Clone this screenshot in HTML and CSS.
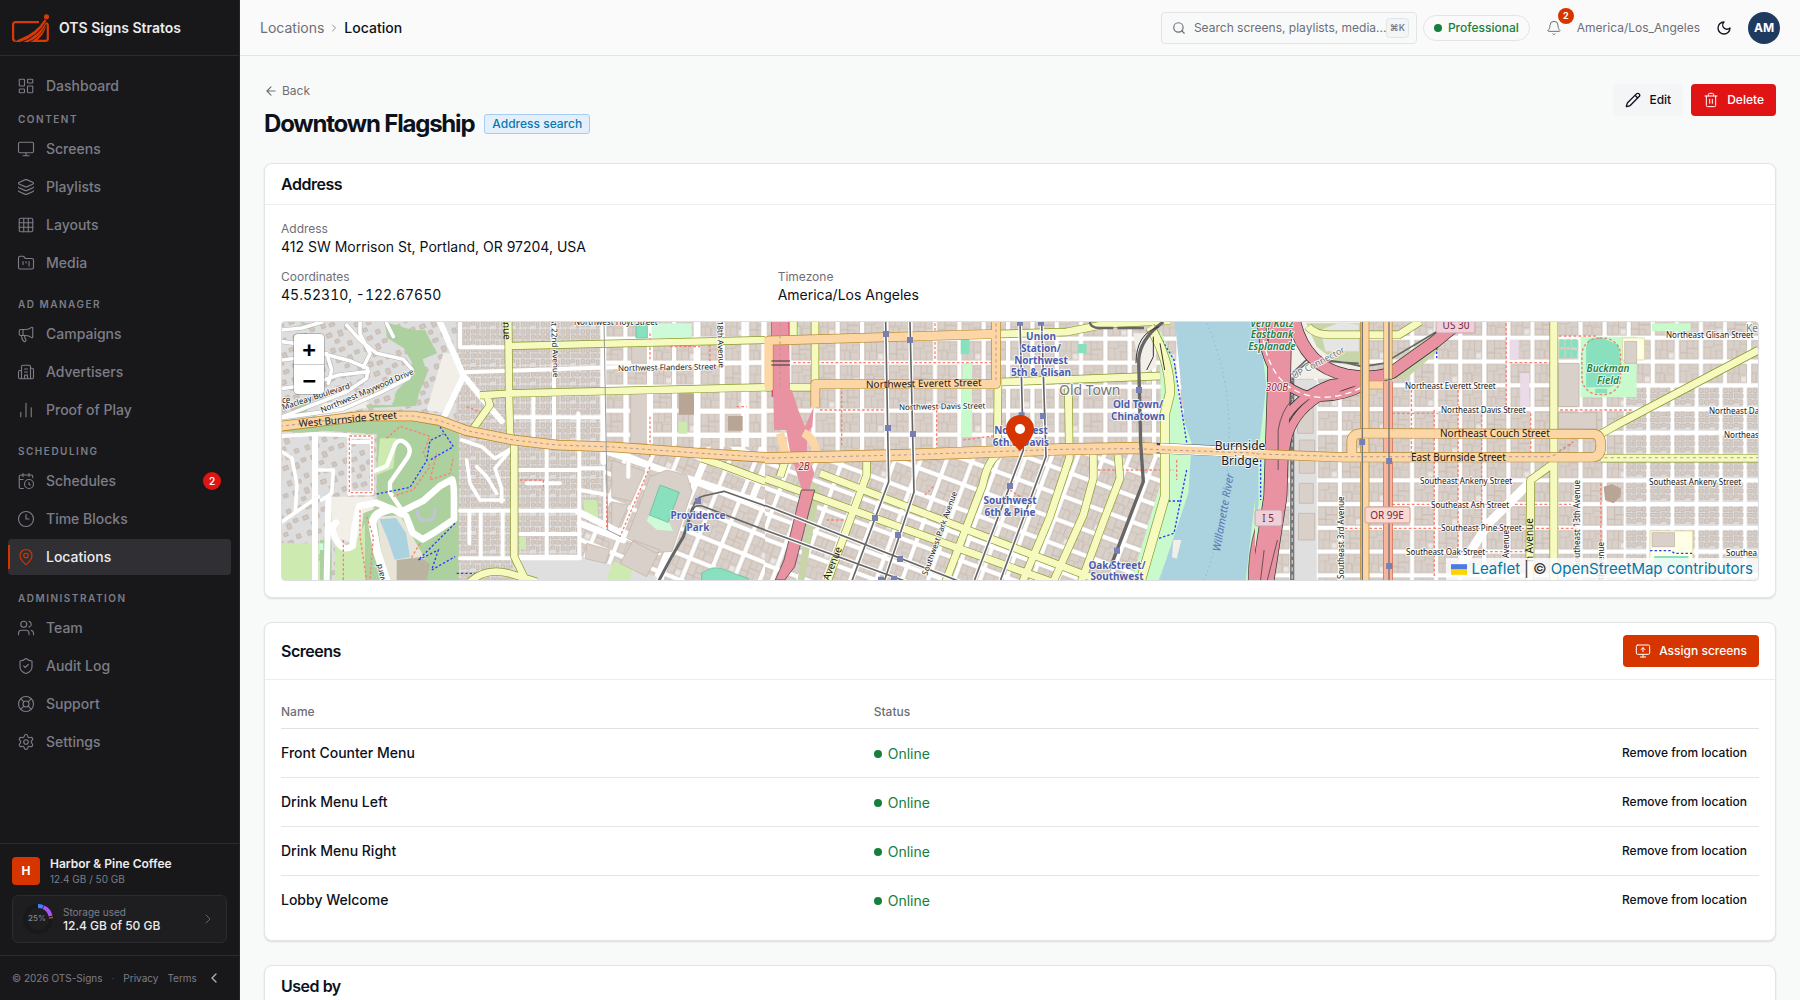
FILE: index.html
```html
<!DOCTYPE html>
<html lang="en">
<head>
<meta charset="utf-8">
<meta name="viewport" content="width=device-width, initial-scale=1">
<title>Location</title>
<link rel="stylesheet" href="styles.css">
</head>
<body>
<div class="app">
<aside class="sidebar">
  <div class="brand">
    <svg class="brand-logo" viewBox="0 0 38 30" aria-hidden="true"><g fill="none" stroke="#d83a07" stroke-width="2.200"><path d="M27 9.200H3.500Q1.100 9.200 1.100 11.500v14Q1.100 27.900 3.500 27.900M34 10Q35.800 10.500 35.800 12v13.600q0 2.300-2.300 2.300H23"/></g><path fill="#d83a07" d="M3 29Q5 26.500 9 25.500Q24 20 32.600 6.600l1.800 1.200Q25 24 8 29zM11 29Q26 23 34 9.500l.7.500Q29 24 16.500 29zM18.500 29Q29 23 34.600 12Q32 23 22.500 29z"/><circle cx="34.500" cy="3.800" r="2.600" fill="#d83a07"/></svg>
    <span>OTS Signs Stratos</span>
  </div>
  <nav class="nav">
    <a class="nav-item" href="#"><svg class="icon" viewBox="0 0 24 24"><rect x="3" y="3" width="7" height="9" rx="1"/><rect x="14" y="3" width="7" height="5" rx="1"/><rect x="14" y="12" width="7" height="9" rx="1"/><rect x="3" y="16" width="7" height="5" rx="1"/></svg>Dashboard</a>
    <section class="nav-group">
      <h2>Content</h2>
      <a class="nav-item" href="#"><svg class="icon" viewBox="0 0 24 24"><rect x="2" y="3" width="20" height="14" rx="2"/><path d="M8 21h8M12 17v4"/></svg>Screens</a>
      <a class="nav-item" href="#"><svg class="icon" viewBox="0 0 24 24"><path d="M12.830 2.180a2 2 0 0 0-1.660 0L2.600 6.080a1 1 0 0 0 0 1.830l8.580 3.910a2 2 0 0 0 1.660 0l8.580-3.900a1 1 0 0 0 0-1.830z"/><path d="M2 12a1 1 0 0 0 .58.91l8.600 3.910a2 2 0 0 0 1.650 0l8.580-3.900A1 1 0 0 0 22 12M2 17a1 1 0 0 0 .58.91l8.600 3.910a2 2 0 0 0 1.650 0l8.580-3.900A1 1 0 0 0 22 17"/></svg>Playlists</a>
      <a class="nav-item" href="#"><svg class="icon" viewBox="0 0 24 24"><rect x="3" y="3" width="18" height="18" rx="2"/><path d="M3 9h18M3 15h18M9 3v18M15 3v18"/></svg>Layouts</a>
      <a class="nav-item" href="#"><svg class="icon" viewBox="0 0 24 24"><path d="M4 20h16a2 2 0 0 0 2-2V8a2 2 0 0 0-2-2h-7.930a2 2 0 0 1-1.660-.9l-.82-1.200A2 2 0 0 0 7.930 3H4a2 2 0 0 0-2 2v13c0 1.100.9 2 2 2ZM8 10v4M12 10v2M16 10v6"/></svg>Media</a>
    </section>
    <section class="nav-group">
      <h2>Ad Manager</h2>
      <a class="nav-item" href="#"><svg class="icon" viewBox="0 0 24 24"><path d="M11 6a13 13 0 0 0 8.400-2.800A1 1 0 0 1 21 4v12a1 1 0 0 1-1.600.8A13 13 0 0 0 11 14H5a2 2 0 0 1-2-2V8a2 2 0 0 1 2-2zM6 14a12 12 0 0 0 2.400 7.200 2 2 0 0 0 3.200-2.400A8 8 0 0 1 10 14M8 6v8"/></svg>Campaigns</a>
      <a class="nav-item" href="#"><svg class="icon" viewBox="0 0 24 24"><path d="M10 12h4M10 8h4M10 16h4M14 21v-3a2 2 0 0 0-4 0v3M6 10H4a2 2 0 0 0-2 2v7a2 2 0 0 0 2 2h16a2 2 0 0 0 2-2V9a2 2 0 0 0-2-2h-2M6 21V5a2 2 0 0 1 2-2h8a2 2 0 0 1 2 2v16"/></svg>Advertisers</a>
      <a class="nav-item" href="#"><svg class="icon" viewBox="0 0 24 24"><path d="M5 21v-6M12 21V3M19 21V9"/></svg>Proof of Play</a>
    </section>
    <section class="nav-group">
      <h2>Scheduling</h2>
      <a class="nav-item" href="#"><svg class="icon" viewBox="0 0 24 24"><path d="M16 14v2.200l1.600 1M16 2v4M21 7.500V6a2 2 0 0 0-2-2H5a2 2 0 0 0-2 2v14a2 2 0 0 0 2 2h3.500M3 10h5M8 2v4"/><circle cx="16" cy="16" r="6"/></svg>Schedules<span class="count">2</span></a>
      <a class="nav-item" href="#"><svg class="icon" viewBox="0 0 24 24"><circle cx="12" cy="12" r="10"/><path d="M12 6v6h4"/></svg>Time Blocks</a>
      <a class="nav-item active" href="#" aria-current="page"><svg class="icon" viewBox="0 0 24 24"><path d="M20 10c0 4.993-5.539 10.193-7.399 11.799a1 1 0 0 1-1.202 0C9.539 20.193 4 14.993 4 10a8 8 0 0 1 16 0"/><circle cx="12" cy="10" r="3"/></svg>Locations</a>
    </section>
    <section class="nav-group">
      <h2>Administration</h2>
      <a class="nav-item" href="#"><svg class="icon" viewBox="0 0 24 24"><path d="M16 21v-2a4 4 0 0 0-4-4H6a4 4 0 0 0-4 4v2M16 3.128a4 4 0 0 1 0 7.744M22 21v-2a4 4 0 0 0-3-3.870"/><circle cx="9" cy="7" r="4"/></svg>Team</a>
      <a class="nav-item" href="#"><svg class="icon" viewBox="0 0 24 24"><path d="M20 13c0 5-3.500 7.500-7.660 8.950a1 1 0 0 1-.67-.01C7.500 20.500 4 18 4 13V6a1 1 0 0 1 1-1c2 0 4.500-1.200 6.240-2.720a1.170 1.170 0 0 1 1.520 0C14.510 3.810 17 5 19 5a1 1 0 0 1 1 1zM9 12l2 2 4-4"/></svg>Audit Log</a>
      <a class="nav-item" href="#"><svg class="icon" viewBox="0 0 24 24"><circle cx="12" cy="12" r="10"/><circle cx="12" cy="12" r="4"/><path d="m4.930 4.930 4.240 4.240M14.830 9.170l4.240-4.240M14.830 14.830l4.240 4.240M9.170 14.830l-4.240 4.240"/></svg>Support</a>
      <a class="nav-item" href="#"><svg class="icon" viewBox="0 0 24 24"><path d="M9.671 4.136a2.340 2.340 0 0 1 4.659 0 2.340 2.340 0 0 0 3.319 1.915 2.340 2.340 0 0 1 2.330 4.033 2.340 2.340 0 0 0 0 3.831 2.340 2.340 0 0 1-2.330 4.033 2.340 2.340 0 0 0-3.319 1.915 2.340 2.340 0 0 1-4.659 0 2.340 2.340 0 0 0-3.320-1.915 2.340 2.340 0 0 1-2.330-4.033 2.340 2.340 0 0 0 0-3.831A2.340 2.340 0 0 1 6.350 6.051a2.340 2.340 0 0 0 3.319-1.915"/><circle cx="12" cy="12" r="3"/></svg>Settings</a>
    </section>
  </nav>
  <div class="account">
    <div class="org">
      <span class="org-mark">H</span>
      <div><div class="org-name">Harbor &amp; Pine Coffee</div><div class="org-sub">12.4 GB / 50 GB</div></div>
    </div>
    <a class="storage" href="#">
      <svg class="donut" viewBox="0 0 30 30"><circle cx="15" cy="15" r="13" fill="none" stroke="#19191b" stroke-width="4"/><g fill="none" stroke-width="4"><path stroke="#3b82f6" d="M15 2A13 13 0 0 1 20 3"/><path stroke="#a855f7" d="M20.500 3.200A13 13 0 0 1 27.600 12"/><path stroke="#b0513a" d="M27.800 13A13 13 0 0 1 28 14.500"/></g><text x="14" y="17" text-anchor="middle">25%</text></svg>
      <div class="storage-text"><div class="storage-label">Storage used</div><div class="storage-value">12.4 GB of 50 GB</div></div>
      <svg class="icon chev" viewBox="0 0 24 24"><path d="m9 18 6-6-6-6"/></svg>
    </a>
  </div>
  <div class="legal">
    <span>© 2026 OTS-Signs</span><span class="mid">·</span><a href="#">Privacy</a><a href="#">Terms</a>
    <button class="collapse" aria-label="Collapse sidebar"><svg class="icon" viewBox="0 0 24 24"><path d="m15 18-6-6 6-6"/></svg></button>
  </div>
</aside>

<div class="content">
<header class="topbar">
  <nav class="crumbs"><a href="#">Locations</a><svg class="icon" viewBox="0 0 24 24"><path d="m9 18 6-6-6-6"/></svg><span>Location</span></nav>
  <div class="tools">
    <label class="search"><svg class="icon" viewBox="0 0 24 24"><circle cx="11" cy="11" r="8"/><path d="m21 21-4.300-4.300"/></svg><input type="text" placeholder="Search screens, playlists, media..." aria-label="Search"><kbd>⌘K</kbd></label>
    <a class="plan" href="#"><i class="dot"></i>Professional</a>
    <button class="bell" aria-label="Notifications"><svg class="icon" viewBox="0 0 24 24"><path d="M10.268 21a2 2 0 0 0 3.464 0M3.262 15.326A1 1 0 0 0 4 17h16a1 1 0 0 0 .74-1.673C19.410 13.956 18 12.499 18 8A6 6 0 0 0 6 8c0 4.499-1.411 5.956-2.738 7.326"/></svg><span class="bell-count">2</span></button>
    <span class="tz">America/Los_Angeles</span>
    <button class="theme" aria-label="Dark mode"><svg class="icon" viewBox="0 0 24 24"><path d="M12 3a6 6 0 0 0 9 9 9 9 0 1 1-9-9Z"/></svg></button>
    <button class="avatar">AM</button>
  </div>
</header>

<main class="page">
  <div class="page-head">
    <div>
      <a class="back" href="#"><svg class="icon" viewBox="0 0 24 24"><path d="m12 19-7-7 7-7M19 12H5"/></svg>Back</a>
      <div class="title-row"><h1>Downtown Flagship</h1><span class="badge">Address search</span></div>
    </div>
    <div class="actions">
      <button class="btn btn-soft"><svg class="icon" viewBox="0 0 24 24"><path d="M21.174 6.812a1 1 0 0 0-3.986-3.987L3.842 16.174a2 2 0 0 0-.5.83l-1.321 4.352a.5.5 0 0 0 .623.622l4.353-1.320a2 2 0 0 0 .83-.497zM15 5l4 4"/></svg>Edit</button>
      <button class="btn btn-danger"><svg class="icon" viewBox="0 0 24 24"><path d="M3 6h18M19 6v14a2 2 0 0 1-2 2H7a2 2 0 0 1-2-2V6M8 6V4a2 2 0 0 1 2-2h4a2 2 0 0 1 2 2v2M10 11v6M14 11v6"/></svg>Delete</button>
    </div>
  </div>

  <section class="card">
    <div class="card-head"><h2>Address</h2></div>
    <div class="card-body">
      <dl class="facts">
        <div class="wide"><dt>Address</dt><dd>412 SW Morrison St, Portland, OR 97204, USA</dd></div>
        <div><dt>Coordinates</dt><dd class="coords">45.52310, -122.67650</dd></div>
        <div><dt>Timezone</dt><dd>America/Los Angeles</dd></div>
      </dl>
      <div class="map">
        <svg class="map-art" viewBox="282 322 1476 258" preserveAspectRatio="xMidYMid slice">
          <defs>
            <g id="b1"><rect width="56" height="54"/><path d="M0 20h30V0M30 30h26M20 20v34M38 30v24M30 12h26"/></g>
            <g id="b2"><rect width="56" height="27"/><rect y="27" width="26" height="27"/><rect x="29" y="32" width="27" height="22"/><path d="M18 0v25M36 10h20M36 0v25M12 29v25"/></g>
            <g id="b3"><rect width="34" height="54"/><rect x="34" width="22" height="32"/><rect x="38" y="36" width="18" height="18" fill="#ebe6e3"/><path d="M0 27h34M14 27v27M20 0v27"/></g>
            <g id="b4"><rect width="22" height="36"/><rect x="22" width="34" height="22"/><rect x="22" y="24" width="34" height="30"/><rect y="38" width="22" height="16"/><path d="M40 0v20M22 38h20v16"/></g>
            <g id="lot"><rect width="61" height="60" fill="#dfdad6" stroke="none"/></g>
            <g id="h1"><path d="M3 3h11v12H3zM19 2h9v14h-9zM33 4h12v9H33zM48 2h9v12h-9zM2 21h14v9H2zM20 20h8v12h-8zM34 19h9v11h-9zM47 20h11v10H47zM4 36h9v14H4zM18 38h12v12H18zM34 36h10v9H34zM49 38h8v14h-8z"/></g>
            <g id="blocks" fill="#d9d0c9" stroke="#c1b2a7" stroke-width="1.500">
              <use href="#lot" x="6" y="6"/><use href="#lot" x="79" y="6"/><use href="#lot" x="152" y="6"/><use href="#lot" x="225" y="6"/><use href="#lot" x="6" y="78"/><use href="#lot" x="79" y="78"/><use href="#lot" x="152" y="78"/><use href="#lot" x="225" y="78"/><use href="#lot" x="6" y="150"/><use href="#lot" x="79" y="150"/><use href="#lot" x="152" y="150"/><use href="#lot" x="225" y="150"/>
              <use href="#b1" x="9" y="9"/><use href="#b2" x="82" y="9"/><use href="#b3" x="155" y="9"/><use href="#b4" x="228" y="9"/>
              <use href="#b3" x="9" y="81"/><use href="#b4" x="82" y="81"/><use href="#b1" x="155" y="81"/><use href="#b2" x="228" y="81"/>
              <use href="#b2" x="9" y="153"/><use href="#b1" x="82" y="153"/><use href="#b4" x="155" y="153"/><use href="#b3" x="228" y="153"/>
            </g>
            <pattern id="city" width="292" height="216" patternUnits="userSpaceOnUse" patternTransform="translate(14 14)"><rect width="292" height="216" fill="#fff"/><use href="#blocks"/></pattern>
            <pattern id="cityE" width="292" height="216" patternUnits="userSpaceOnUse" patternTransform="translate(50 12) scale(.94 .99)"><rect width="292" height="216" fill="#fff"/><use href="#blocks"/></pattern>
            <pattern id="citySW" width="292" height="216" patternUnits="userSpaceOnUse" patternTransform="translate(380 515) rotate(20.400)"><rect width="292" height="216" fill="#fff"/><use href="#blocks"/></pattern>
            <pattern id="citySW2" width="292" height="216" patternUnits="userSpaceOnUse" patternTransform="translate(1270 450) rotate(22)"><rect width="292" height="216" fill="#fff"/><use href="#blocks"/></pattern>
            <pattern id="homes" width="69" height="71.280" patternUnits="userSpaceOnUse" patternTransform="translate(1065 12)"><rect width="69" height="72" fill="#fff"/><g transform="translate(6 7)" fill="#d9d0c9" stroke="#bfb0a5" stroke-width="2"><rect width="58" height="58" fill="#dcdcdc" stroke="none"/><use href="#h1"/></g></pattern>
            <pattern id="homesW" width="60" height="56" patternUnits="userSpaceOnUse"><rect width="60" height="56" fill="#e0dfdf"/><use href="#h1" fill="#d9d0c9" stroke="#bfb0a5" stroke-width="2"/></pattern>
            <pattern id="homesH" width="90" height="80" patternUnits="userSpaceOnUse" patternTransform="rotate(-22)"><rect width="90" height="80" fill="#dedede"/><g fill="#d3c9c1" stroke="#b9aa9f" stroke-width="2"><path d="M6 6h12v14H6zM30 14h16v10H30zM62 4h12v12H62zM10 40h16v12H10zM46 44h12v16H46zM70 38h14v10H70zM28 66h12v10H28z"/></g></pattern>
          </defs>

          <!-- West side: Hillside, Washington Park, Northwest District -->
          <svg x="282" y="322" width="483" height="258" viewBox="6 36 1449 774">
            <rect x="0" y="30" width="540" height="790" fill="url(#homesH)"/>
            <rect x="530" y="30" width="440" height="790" fill="url(#homesW)"/>
            <rect x="965" y="30" width="500" height="420" fill="url(#city)"/>
            <path fill="url(#citySW2)" d="M970 410H1460V820H900V640L985 660z"/>
            <path fill="#e0dfdf" d="M905 740L1130 800V820H700V745z"/>
            <path fill="#d9d0c9" stroke="#c1b2a7" stroke-width="2" d="M995 450l100 34-40 90-60-14zM995 575l50 10-30 70-20-6zM920 700l70 20-14 40-60-14zM1055 100h48v60h-48zM1052 250h52v150h-52z"/>
            <g fill="#f2efe9"><path d="M490 130l45 0 15 70-50 110-60-10zM130 280l120-20 20 30-170 40zM150 560h130v60l-60 80-60-20z"/></g>
            <g fill="#add19e"><path d="M315 36l85 25 35-1 36 70-43 18 14 42-25 60-10 38-145 6-4-10 80 2 12-44 45-48 0-38-24-42-50-30zM6 350l240-26 160-4 70 12 60 28v450H230l20-200 40-16V372l-160-10-60 8-64-6z"/><path d="M120 690h35v120h-35zM50 270l40 0-10 40-40 10zM60 40h30v20z"/></g>
            <g fill="#cdebb0"><path d="M300 385h50l-10 90-50 20zM6 700h110v110H6zM165 710l60-10 30-60v170h-90zM910 570h40l5 50-40 4zM720 680l18 0v40l-20-4zM1000 755l60 14-10 45-70-6zM1195 335h26v36h-26z"/></g>
            <path fill="#e9e4d8" d="M290 620l70-4 35 60 40 70-60 10 0 54h-60z"/>
            <path fill="#b9b39f" d="M350 750l70-8 30 20-10 50h-90z"/>
            <path fill="#aad3df" d="M298 628l50-4 30 45 12 72-46 8-20-60z"/>
            <g fill="none" stroke="#fff" stroke-linejoin="round" stroke-linecap="round">
              <path stroke="#b5b5b5" stroke-width="14" d="M6 95l60 8 70 30 75 20 52 22-3 30-60 40-190 74M200 45l40 45 50 40 80 18 26 30-10 26-90 46-110 48-186 26M240 36v35l30 60-20 40M6 60l60-6 60-18M140 130l15 50-10 40M320 40l20 40M6 150l80-10M6 235l80-10 90-30 90-10"/>
              <path stroke-width="11" d="M6 95l60 8 70 30 75 20 52 22-3 30-60 40-190 74M200 45l40 45 50 40 80 18 26 30-10 26-90 46-110 48-186 26M240 36v35l30 60-20 40M6 60l60-6 60-18M140 130l15 50-10 40M320 40l20 40M6 150l80-10M6 235l80-10 90-30 90-10M6 425l30 20 15 80-5 80M6 635L115 560M115 480h45l-5 70-30 20M560 450l10 70 30 50h70M545 390l60 20 40 35 50-30-50 60 20 60 0 40M590 470l30 30 30 50"/>
              <path stroke-width="18" d="M105 378v440M480 36l70 160 70 85 45 52M550 200l-55 115M145 560l-5 250M970 36v420M1110 36v360M1250 36v390"/>
              <path stroke-width="12" d="M6 378l100-6 102 4v176M208 380h68v170H208M208 396h68M540 112h145M550 187l905-30M540 30v80M822 36v360M895 310v90M700 322h265M760 255v130M800 415v325M898 415v330M540 602h360M540 745h360M668 602v140M602 602v140M568 610v90M718 480h180M720 672h180M720 740h180M740 520h100M900 540l80 14M1045 420v80M1185 250v150M1040 255v150M900 475h70M1325 36v390M1390 36v400M1450 36v400M1260 305h200M1260 378h200"/>
              <path stroke-width="13" d="M285 482l35-14 26-66q14-20 34 0t-4 50l-46 66 0 30 34 50"/>
              <path stroke-width="20" d="M370 602l60-30 50-44 36-20q6 4 6 60v60l-60 40-34 20-30-20-20-50-40-20-50-20-50 10-14 60-6 60q-30 20-50-20t0-50"/>
              <path stroke-width="24" d="M330 598q-56 10-52 50l14 80 30 92"/>
              <path stroke-width="20" d="M980 424l480 160M895 605l240 120M1280 440l-60 140-80 230M900 640l130 50M1455 470l-40 100"/>
            </g>
            <g fill="none" stroke="#fa8072" stroke-width="4" stroke-dasharray="8 6"><path d="M208 378h68v170h-68zM320 385l40-36 90 30-20 50 20 40-50 70-60 20M470 430l-20 80 60-20 10-50M240 600v80l20 130M190 690v120M260 620l20 60-10 130M1110 70v80M1170 110h90M1110 320v120M1110 470l-90 210M720 510h70v30M420 700l-30 50M1290 90v70M560 290l50 20M980 560v100M1370 290h30"/></g>
            <g fill="none" stroke="#2a3cff" stroke-width="4" stroke-dasharray="7 6"><path d="M290 552l100-20 50-80 10-60 40-20M480 350l40 60-70 40M525 640l-110 110 60-30-20 60 70-40M530 790h60"/></g>
            <path d="M412 600q0 34 30 32 26-2 22-40" fill="none" stroke="#c3c3d6" stroke-width="10"/>
            <g><path fill="#d9d0c9" stroke="#bfb0a5" stroke-width="2" d="M1110 500l50-20 60 14 16 50-60 180-50 4-86-44zM1060 690l80 30-40 80-80-40z"/><path fill="#cdfad8" d="M1108 615l60 24 12 24-50-4-30-26z"/><path fill="#88e0be" stroke="#5cb795" stroke-width="2" d="M1140 525l58 22-34 90-56-22zM1068 40h34v44h-34zM1265 790q30-24 60-14l80 30v10h-140z"/><path fill="#cdfad8" d="M1115 40h120v44h-120zM118 700h12v20h-12z"/><path fill="#b8a595" d="M1196 250h46v64h-46zM1344 318h44v44h-44z"/></g>
            <g fill="none" stroke-linejoin="round">
              <path stroke="#8a9a2c" stroke-width="24" d="M685 36l2 214 3 120 13 30v340l36 75M690 108l765-18M600 256l100-6 755-18M620 255l10 30-50 70M570 815q50-44 120-24l80 24M1265 445l60 20 160 60"/>
              <path stroke="#f7fabf" stroke-width="20" d="M685 36l2 214 3 120 13 30v340l36 75M690 108l765-18M600 256l100-6 755-18M620 255l10 30-50 70M570 815q50-44 120-24l80 24M1265 445l60 20 160 60"/>
              <path stroke="#b98a2e" stroke-width="32" d="M0 349l250-31h150l80 14 80 30 140 28 130 15 170 6 250 18 220 14"/>
              <path stroke="#fcd6a4" stroke-width="27" d="M0 349l250-31h150l80 14 80 30 140 28 130 15 170 6 250 18 220 14"/>
              <path stroke="#b49a90" stroke-width="3" stroke-dasharray="9 9" d="M0 349l250-31h150l80 14 80 30 140 28 130 15 170 6 250 18 220 14"/>
              <path stroke="#999" stroke-width="3" d="M972 36l11 624 40 20"/>
              <path stroke="#666" stroke-width="9" d="M1135 815l40-75 35-60 30-90"/>
              <path stroke="#666" stroke-width="5" d="M1240 590q5-26 30-32l62-14 130 46M1236 604q5-20 30-16l200 76"/>
              <path stroke="#fcd6a4" stroke-width="24" d="M1465 80v150"/>
            </g>
            <rect x="1245" y="564" width="18" height="18" fill="#7680b3"/>
          </svg>

          <!-- Downtown, Old Town and the west bank of the river -->
          <svg x="765" y="322" width="490" height="258" viewBox="15 36 1470 774">
            <rect y="30" width="1490" height="420" fill="url(#city)"/>
            <path fill="url(#citySW)" d="M0 445l1240-25v400H0z"/>
            <path fill="#c8d5a9" d="M100 440l40 10-10 30 50 60-50 290H110l30-200z"/>
            <g fill="#c8facc"><path d="M608 160h28v220h-34zM1200 60l40 90 22 150 40 100-10 160-100 260h-80l120-400-30-120zM100 50h16v30h-16z"/></g>
            <path fill="#88e0be" d="M602 85h26v48h-26zM954 102h26v28h-26z"/>
            <path fill="#aad3df" d="M1245 36h250v784h-300l60-180 30-90 10-150-20-60-20-200z"/>
            <g fill="#f2efe9"><path d="M1120 70l60 0 10 100-50 30zM1240 690l24 0-14 56-14-4z"/></g>
            <path fill="#c8facc" d="M1486 560v260h-30z"/>
            <path fill="#e892a2" stroke="#333" stroke-width="2" d="M1487 650q-24 80-22 170h30z"/>
            <path d="M1340 40q80 180 65 400t-75 380" fill="none" stroke="#8fb0cc" stroke-width="3" stroke-dasharray="4 10"/>
            <g fill="none" stroke="#fa8072" stroke-width="4" stroke-dasharray="8 6"><path d="M100 158h600M525 40v110M245 230v180M530 300v120M1000 480h240M180 300h190M610 390l110-15M200 630h50M750 540l60 40M1250 450v60M520 530l-30 30"/></g>
            <g fill="none" stroke="#2a3cff" stroke-width="4" stroke-dasharray="7 6"><path d="M1200 80l42 70 26 170 14 90M1280 480l-18 90-20 100-60 20-40 120M1225 573h40M1497 440v130"/></g>
            <g fill="none" stroke-linejoin="round">
              <g stroke="#8a9a2c" stroke-width="25"><path d="M165 36v190M100 36v60M15 232h145M720 72l200-6 120-24 190-10M725 216l475-18M925 235l3 210-60 180-80 190M714 220l-2 215q-30 20-44 90L555 820M1000 435v70l-30 110-90 200M1074 435l6 70-50 130-70 190M320 445v50L200 820M15 505l940 340M180 490l860 330M80 440l-20 60"/></g>
              <g stroke="#f7fabf" stroke-width="21"><path d="M165 36v190M100 36v60M15 232h145M720 72l200-6 120-24 190-10M725 216l475-18M925 235l3 210-60 180-80 190M714 220l-2 215q-30 20-44 90L555 820M1000 435v70l-30 110-90 200M1074 435l6 70-50 130-70 190M320 445v50L200 820M15 505l940 340M180 490l860 330M80 440l-20 60"/></g>
              <path stroke="#8a9a2c" stroke-width="30" d="M1170 50q60 100 60 200l-15 60v250l-75 260"/>
              <path stroke="#f7fabf" stroke-width="26" d="M1170 50q60 100 60 200l-15 60v250l-75 260"/>
              <path stroke="#d2486f" stroke-width="54" d="M60 30l2 230"/>
              <path stroke="#e892a2" stroke-width="50" d="M60 30l4 230"/>
              <path fill="#e892a2" d="M40 240h55l20 60 20 50 26-60-4 60-16 20 0 60 22 60-18 60h-16l-40-130-10-60H42z"/>
              <path fill="#e892a2" stroke="#333" stroke-width="2" d="M124 540h40l-60 230-30 40H46l26-60z"/>
              <g stroke="#b98a2e" stroke-width="29"><path d="M26 240V92l674-20M708 36v186H166v70"/></g>
              <g stroke="#fcd6a4" stroke-width="25"><path d="M26 240V92l674-20M708 36v186H166v70"/><path d="M60 370l16 60M130 368q36 20 38 60"/></g>
              <path stroke="#b98a2e" stroke-width="36" d="M0 445l430-10 190-7 280-10 220-4 60 2"/>
              <path stroke="#444" stroke-width="32" d="M1180 414l320 14"/>
              <path stroke="#fff" stroke-width="30" d="M1200 415l300 14"/>
              <path stroke="#fcd6a4" stroke-width="32" d="M0 445l430-10 190-7 280-10 220-4 70 2"/>
              <path stroke="#fcd6a4" stroke-width="22" d="M1180 416l320 14"/>
              <path stroke="#b49a90" stroke-width="3" stroke-dasharray="9 9" d="M0 445l430-10 190-7 280-10 220-2 380 14M708 40v170M60 40v200"/>
              <g stroke="#fff" stroke-width="12"><path d="M377 36l9 479-111 300M450 36l12 510-90 270M780 36l10 384-150 400M845 36l13 404-140 380M0 580l600 235M0 655l440 160"/></g>
              <g stroke="#666" stroke-width="5"><path d="M377 36l9 479-111 300M450 36l12 510-90 270M780 36l10 384-150 400M845 36l13 404-140 380M0 580l600 235M0 655l440 160"/></g>
              <path stroke="#666" stroke-width="10" d="M1210 36q-70 50-74 114l6 250 8 115-100 260"/><path stroke="#666" stroke-width="7" d="M990 36q0 18 30 18h40M1072 54h80"/>
              <path stroke="#333" stroke-width="3" d="M34 153h56M34 165h56M1128 160q0-90 70-110M1200 100l14 80M1180 80v60l-20 40"/>
            </g>
            <path fill="#7680b3" d="M369 63h18v18h-18zM441 81h18v18h-18zM771 29h18v18h-18zM834 29h18v18h-18zM375 345h18v18h-18zM450 363h18v18h-18zM776 307h18v18h-18zM840 309h18v18h-18zM741 519h18v18h-18zM1128 231h18v18h-18zM1062 713h18v18h-18zM336 615h18v18h-18zM405 666h18v18h-18zM411 738h18v18h-18zM354 800h18v18h-18zM393 797h18v18h-18z"/>
          </svg>

          <!-- East side and the interstate -->
          <svg x="1255" y="322" width="503" height="258" viewBox="14 36 1434 774" preserveAspectRatio="none">
            <rect x="0" y="30" width="1460" height="790" fill="url(#cityE)"/>
            <path fill="url(#homes)" d="M1065 230h390v590h-390z"/>
            <path fill="#e0dfdf" d="M125 210h65v610h-65z"/><path fill="#d9d0c9" stroke="#bfb0a5" stroke-width="2" d="M135 280h45v90h-45zM140 390h44v100h-44zM140 520h40v60h-40zM138 610h46v80h-46z"/>
            <path fill="#f2efe9" d="M0 36h330v170H60z"/>
            <path fill="#c8d5a9" d="M160 40h160v130l-70-10-60-50zM400 200l30-60 110-80v60L440 210z"/>
            <path fill="#e5e5e5" d="M200 60l60-24 50 8v80H215z"/>
            <path fill="#c8facc" d="M14 36h50v774H14z"/>
            <path fill="#aad3df" d="M0 36h20l16 100 10 90-14 130-8 60v170L0 700z"/>
            <g fill="#c8facc"><path d="M942 80h160v182H942zM1146 40h110v24h-110z"/></g>
            <path fill="#88e0be" d="M966 88l34-6 50 22 6 50-2 66-30 12h-66V110zM984 236h34v14h-34zM882 88h14v24h-14zM900 88h14v24h-14zM918 88h14v24h-14zM882 120h14v24h-14zM900 120h14v24h-14zM918 120h14v24h-14z"/>
            <rect x="946" y="84" width="110" height="170" rx="50" fill="none" stroke="#e08878" stroke-width="4" stroke-dasharray="8 6"/>
            <path fill="#ffffe5" stroke="#d9d28c" stroke-width="2" d="M1140 663h122v90h-122zM1062 84h62v66h-62z"/>
            <path fill="#d9d0c9" stroke="#bfb0a5" stroke-width="2" d="M1068 94h34v66h-34zM1146 668h64v42h-64zM878 160h60v130h-60zM878 308h110v48H878z"/>
            <path fill="#88e0be" d="M1152 738h98v30h-98z"/>
            <path fill="#b8a595" d="M1008 530l24-8 26 14-2 24-20 20-24-10z"/>
            <path fill="#ebdbe8" d="M770 190h26v100h-26zM740 90h26v60h-26z"/>
            <path d="M1140 722h60l10 8h50" fill="none" stroke="#2a3cff" stroke-width="4" stroke-dasharray="7 6"/>
            <g fill="none" stroke="#fa8072" stroke-width="4" stroke-dasharray="8 6"><path d="M460 240v190M525 300v500M593 240v560M660 300v350M730 40v260M800 310v120M405 583h510M270 655h660M460 725h340M740 158h120M870 300h220M880 78h110M1000 520v200M405 310h130M870 430l60-40"/></g>
            <path d="M532 60v90M30 450v120" fill="none" stroke="#2a3cff" stroke-width="4" stroke-dasharray="7 6"/>
            <g fill="none" stroke-linejoin="round">
              <path stroke="#fff" stroke-width="26" d="M795 520L680 640 600 770"/>
              <path stroke="#8a9a2c" stroke-width="25" d="M866 36v780M1000 372l50-30 400-222M1000 445h450M866 460l-66 50-3 310M165 50q20 24 60 24h200l60-40"/>
              <path stroke="#f7fabf" stroke-width="21" d="M866 36v780M1000 372l50-30 400-222M1000 445h450M866 460l-66 50-3 310M165 50q20 24 60 24h200l60-40"/>
              <path stroke="#777" stroke-width="12" d="M120 200v620"/><path stroke="#ddd" stroke-width="3" stroke-dasharray="12 10" d="M120 200v620"/>
              <path stroke="#666" stroke-width="5" d="M120 210q30-60 80-60t120 20l60-10 160-100M110 200l50-50 150 10"/>
              <g stroke="#333"><path stroke-width="68" d="M86 30l-4 200-10 330-38 260"/><path stroke-width="38" d="M125 30q30 140 150 165 80 14 130-8l120-90 70-60"/><path stroke-width="26" d="M32 30q10 220 170 232 70 0 130-38M62 500q-10-210 170-280l100-10M100 440q0-180 240-235"/></g>
              <g stroke="#e892a2"><path stroke-width="64" d="M86 30l-4 200-10 330-38 260"/><path stroke-width="34" d="M125 30q30 140 150 165 80 14 130-8l120-90 70-60"/><path stroke-width="22" d="M32 30q10 220 170 232 70 0 130-38M62 500q-10-210 170-280l100-10M100 440q0-180 240-235"/></g>
              <path stroke="#fff" stroke-width="4" stroke-dasharray="18 12" d="M32 30q10 220 170 232 70 0 130-38"/>
              <path stroke="#333" stroke-width="2" d="M80 480v-120q10-60 40-90M78 690l-30 125M40 720l-10 90"/>
              <path stroke="#b98a2e" stroke-width="26" d="M327 36v784M393 36v170M340 225h50"/>
              <path stroke="#fcd6a4" stroke-width="22" d="M327 36v784M393 36v170M340 225h50"/>
              <path stroke="#d4684a" stroke-width="28" d="M393 215v610"/><path stroke="#f9b29c" stroke-width="24" d="M393 215v610"/>
              <path stroke="#b98a2e" stroke-width="30" d="M290 440v-46q0-24 30-24l660 2q20 2 20 35t-25 35H260L14 432"/>
              <path stroke="#fcd6a4" stroke-width="26" d="M290 440v-46q0-24 30-24l660 2q20 2 20 35t-25 35H260L0 431"/>
              <path stroke="#b49a90" stroke-width="3" stroke-dasharray="9 9" d="M0 431l260 9h600l60-40M1010 443h440"/>
              <path stroke="#777" stroke-width="4" d="M320 36v784M396 36v784"/>
            </g>
            <path fill="#7680b3" d="M311 387h17v18h-17zM388 444h17v18h-17zM388 759h17v18h-17z"/>
          </svg>

          <g class="street">
            <text x="618" y="371" transform="rotate(-1 618 370)">Northwest Flanders Street</text><text x="899" y="410" transform="rotate(-1 899 410)">Northwest Davis Street</text>
            <text x="574" y="325">Northwest Hoyt Street</text>
            <text transform="translate(322 413) rotate(-23)">Northwest Maywood Drive</text><text transform="translate(283 410) rotate(-18)">Macleay Boulevard</text><text x="282" y="403">ce</text>
            <text transform="translate(551 315) rotate(88)">est 22nd Avenue</text><text transform="translate(717 316) rotate(88)">t 18th Avenue</text>
            <text transform="translate(927 576) rotate(-70)">Southwest Park Avenue</text>
            <text transform="translate(385 580) rotate(-102)">vard</text>
            <text x="1405" y="389">Northeast Everett Street</text><text x="1441" y="413">Northeast Davis Street</text>
            <text x="1420" y="484">Southeast Ankeny Street</text><text x="1649" y="485">Southeast Ankeny Street</text>
            <text x="1431" y="508">Southeast Ash Street</text><text x="1441" y="531">Southeast Pine Street</text><text x="1406" y="555">Southeast Oak Street</text>
            <text x="1666" y="338">Northeast Glisan Street</text><text x="1709" y="414">Northeast Da</text><text x="1724" y="438">Northeas</text><text x="1726" y="556">Southea</text>
            <text transform="translate(1344 579) rotate(-90)">Southeast 3rd Avenue</text><text transform="translate(1580 567) rotate(-90)">Southeast 13th Avenue</text><text transform="translate(1509 558) rotate(-90)">Avenue</text><text transform="translate(1604 580) rotate(-90)">th Avenue</text>
          </g>
          <g class="street main">
            <text transform="translate(299 427) rotate(-5)">West Burnside Street</text><text x="866" y="388" transform="rotate(-1 866 388)">Northwest Everett Street</text>
            <text x="1440" y="437">Northeast Couch Street</text><text x="1411" y="461">East Burnside Street</text>
            <text transform="translate(503 322) rotate(88)">nue</text><text transform="translate(829 581) rotate(-68)">Avenue</text><text transform="translate(1533 562) rotate(-90)">h Avenue</text>
          </g>
          <g class="bridge"><text x="1240" y="450">Burnside</text><text x="1240" y="465">Bridge</text></g>
          <g class="stop">
            <text x="698" y="519">Providence</text><text x="698" y="531">Park</text>
            <text x="1041" y="340">Union</text><text x="1041" y="352">Station/</text><text x="1041" y="364">Northwest</text><text x="1041" y="376">5th &amp; Glisan</text>
            <text x="1138" y="408">Old Town/</text><text x="1138" y="420">Chinatown</text>
            <text x="1021" y="434">Northwest</text><text x="1021" y="446">6th &amp; Davis</text>
            <text x="1010" y="504">Southwest</text><text x="1010" y="516">6th &amp; Pine</text>
            <text x="1117" y="569">Oak Street/</text><text x="1117" y="580">Southwest</text>
          </g>
          <g class="green"><text x="1272" y="327">Vera Katz</text><text x="1272" y="338">Eastbank</text><text x="1272" y="350">Esplanade</text><text x="1608" y="372">Buckman</text><text x="1608" y="384">Field</text></g>
          <g class="exit"><text x="1277" y="391">300B</text><text x="804" y="470">2B</text></g>
          <text class="river" transform="translate(1220 552) rotate(-80)">Willamette River</text>
          <text class="rail" transform="translate(1294 379) rotate(-28)">UP Connector</text>
          <text class="district" x="1059" y="395">Old Town</text><text class="district small" x="1746" y="332">Ke</text>
          <g class="shield"><rect x="1436" y="315" width="39" height="18" rx="2"/><text x="1456" y="329">US 30</text><rect x="1255" y="510" width="27" height="16" rx="2"/><text x="1268" y="522">I 5</text></g>
          <g class="shield trunk"><rect x="1365" y="507" width="45" height="16" rx="2"/><text x="1387" y="519">OR 99E</text></g>
          <path fill="#d63500" d="M1020 415a14 14 0 0 1 14 14c0 8-9 17-14 22-5-5-14-14-14-22a14 14 0 0 1 14-14z"/><circle cx="1020" cy="429" r="5" fill="#fff"/>
        </svg>
        <div class="zoom"><button aria-label="Zoom in">+</button><button aria-label="Zoom out">−</button></div>
        <div class="credit"><svg viewBox="0 0 12 8"><path fill="#4c7be1" d="M0 0h12v4H0z"/><path fill="#ffd500" d="M0 4h12v4H0z"/></svg><a href="#">Leaflet</a><span>|</span><span>©</span><a href="#">OpenStreetMap contributors</a></div>
      </div>
    </div>
  </section>

  <section class="card">
    <div class="card-head"><h2>Screens</h2><button class="btn btn-primary"><svg class="icon" viewBox="0 0 24 24"><path d="m9 10 3-3 3 3M12 13V7M12 17v4M8 21h8"/><rect x="2" y="3" width="20" height="14" rx="2"/></svg>Assign screens</button></div>
    <div class="card-body">
      <table>
        <thead><tr><th class="col-name">Name</th><th>Status</th><th></th></tr></thead>
        <tbody>
          <tr><td class="name">Front Counter Menu</td><td><span class="status"><i class="dot"></i>Online</span></td><td class="act"><button class="btn btn-ghost">Remove from location</button></td></tr>
          <tr><td class="name">Drink Menu Left</td><td><span class="status"><i class="dot"></i>Online</span></td><td class="act"><button class="btn btn-ghost">Remove from location</button></td></tr>
          <tr><td class="name">Drink Menu Right</td><td><span class="status"><i class="dot"></i>Online</span></td><td class="act"><button class="btn btn-ghost">Remove from location</button></td></tr>
          <tr><td class="name">Lobby Welcome</td><td><span class="status"><i class="dot"></i>Online</span></td><td class="act"><button class="btn btn-ghost">Remove from location</button></td></tr>
        </tbody>
      </table>
    </div>
  </section>

  <section class="card">
    <div class="card-head"><h2>Used by</h2></div>
    <div class="card-body"></div>
  </section>
</main>
</div>
</div>
</body>
</html>
```
FILE: styles.css
```css
* { box-sizing: border-box; }
body { margin: 0; font-family: Inter, "Liberation Sans", sans-serif; font-size: 14px; line-height: 20px; color: #0c111b; background: #f8faf9; }
a { color: inherit; text-decoration: none; }
button { font: inherit; color: inherit; border: 0; padding: 0; background: none; cursor: pointer; }
h1, h2, dl, dd { margin: 0; }
.icon { width: 18px; height: 18px; flex: none; fill: none; stroke: currentColor; stroke-width: 1.5; stroke-linecap: round; stroke-linejoin: round; }
.dot { width: 8px; height: 8px; border-radius: 50%; background: #15803d; flex: none; }

.app { display: flex; height: 100vh; overflow: hidden; }

/* Sidebar */
.sidebar { width: 240px; flex: none; display: flex; flex-direction: column; background: #18181a; color: #7d7d87; border-right: 1px solid #26262a; }
.brand { height: 56px; flex: none; display: flex; align-items: center; gap: 9px; padding: 0 12px; border-bottom: 1px solid #2c2c30; color: #ececee; font-weight: 600; }
.brand-logo { width: 38px; height: 30px; }
.nav { flex: 1; min-height: 0; overflow: hidden; display: flex; flex-direction: column; gap: 2px; padding: 12px 8px 0; }
.nav-item { position: relative; height: 36px; flex: none; display: flex; align-items: center; gap: 11px; padding: 0 9px; border-radius: 4px; font-weight: 500; }
.nav-item.active { background: #303034; color: #ececee; }
.nav-item.active .icon { color: #d63500; }
.nav-item.active::before { content: ""; position: absolute; left: 0; top: 6px; bottom: 6px; width: 2px; background: #d63500; }
.nav-group { display: flex; flex-direction: column; gap: 2px; margin-top: 6px; }
.nav-group:nth-of-type(1) { margin-top: -2px; }
.nav-group h2 { padding: 7px 10px 2px; font-size: 10px; line-height: 16px; font-weight: 600; letter-spacing: 0.15em; text-transform: uppercase; }
.count { margin-left: auto; width: 18px; height: 18px; margin-right: 1px; border-radius: 50%; background: #e01414; color: #fff; font-size: 10px; line-height: 18px; font-weight: 600; text-align: center; }
.account { border-top: 1px solid #2c2c30; padding: 12px; }
.org { display: flex; align-items: center; gap: 10px; height: 30px; margin-bottom: 9px; }
.org-mark { width: 28px; height: 28px; border-radius: 4px; background: #d63500; color: #fff; font-size: 12px; line-height: 28px; font-weight: 700; text-align: center; }
.org-name { color: #ececee; font-size: 12px; line-height: 16px; font-weight: 600; }
.org-sub, .storage-label { font-size: 10px; line-height: 14px; }
.storage { display: flex; align-items: center; gap: 10px; height: 48px; padding: 0 10px; border: 1px solid #2c2c30; border-radius: 6px; background: #1e1e20; }
.storage-value { color: #ececee; font-size: 12px; line-height: 14px; font-weight: 500; }
.storage-text { flex: 1; }
.donut { width: 30px; height: 30px; }
.donut text { font-size: 8px; fill: #85858f; font-weight: 500; }
.chev { width: 16px; height: 16px; color: #62626a; }
.legal { height: 45px; flex: none; display: flex; align-items: center; gap: 9px; padding: 0 12px; border-top: 1px solid #2c2c30; font-size: 10px; }
.mid { color: #45454c; }
.collapse { display: flex; color: #b0b0b8; }
.collapse .icon { width: 16px; height: 16px; stroke-width: 2; }

/* Top bar */
.content { flex: 1; min-width: 0; display: flex; flex-direction: column; }
.topbar { height: 56px; flex: none; display: flex; align-items: center; justify-content: space-between; padding: 0 20px; background: #fafafa; border-bottom: 1px solid #e2e5e6; }
.crumbs { display: flex; align-items: center; gap: 4px; color: #6e6e78; }
.crumbs .icon { width: 12px; height: 12px; }
.crumbs span { color: #0c111b; font-weight: 500; }
.tools { display: flex; align-items: center; color: #6e6e78; }
.search { width: 256px; height: 32px; display: flex; align-items: center; padding: 0 7px 0 10px; border: 1px solid #e2e5e6; border-radius: 4px; background: #f8faf9; }
.search .icon { width: 14px; height: 14px; margin-right: 8px; stroke-width: 2; }
.search input { flex: 1; min-width: 0; padding: 0; border: 0; outline: 0; background: none; font: inherit; font-size: 12px; }
.search input::placeholder { color: #6e6e78; opacity: 1; }
kbd { height: 20px; padding: 0 3px; border: 1px solid #e2e5e6; border-radius: 4px; font: 500 9px/18px Inter, sans-serif; background: #f3f5f6; }
.plan { display: flex; align-items: center; gap: 6px; height: 26px; margin-left: 6px; padding: 0 10px; border: 1px solid #e2e5e6; border-radius: 13px; color: #15803d; font-size: 12px; font-weight: 500; }
.bell { position: relative; display: flex; margin-left: 16px; }
.bell .icon, .theme .icon { width: 16px; height: 16px; }
.bell-count { position: absolute; left: 12px; top: -12px; width: 16px; height: 16px; border-radius: 50%; background: #d63500; color: #fff; font-size: 9px; line-height: 16px; font-weight: 700; }
.tz { margin-left: 15px; font-size: 12px; }
.theme { display: flex; margin-left: 16px; color: #0c111b; }
.theme .icon { stroke-width: 2; }
.avatar { width: 32px; height: 32px; margin-left: 16px; border-radius: 50%; background: #1f3a5f; color: #fff; font-size: 12px; font-weight: 700; }

/* Page */
.page { flex: 1; min-height: 0; overflow-y: auto; scrollbar-width: none; padding: 24px; }
.page-head { display: flex; justify-content: space-between; align-items: flex-start; margin-bottom: 24px; }
.back { display: flex; align-items: center; gap: 4px; height: 22px; margin-bottom: 7px; color: #6e6e78; font-size: 12px; }
.back .icon { width: 14px; height: 14px; stroke-width: 2; }
.title-row { display: flex; align-items: center; gap: 10px; }
h1 { font-size: 24px; line-height: 30px; font-weight: 700; letter-spacing: -0.05em; }
.badge { height: 20px; padding: 0 7px; border: 1px solid #a5cdf3; border-radius: 3px; background: #e3f0fb; color: #0b76b0; font-size: 12px; line-height: 18px; font-weight: 500; }
.actions { display: flex; gap: 8px; margin-top: 4px; }
.btn { display: inline-flex; align-items: center; gap: 8px; height: 32px; padding: 0 12px; border-radius: 4px; font-size: 12px; font-weight: 500; }
.btn .icon { width: 16px; height: 16px; }
.btn-soft { background: #f4f5f7; }
.btn-soft .icon { stroke-width: 2; }
.btn-danger { background: #e01414; color: #fff; }
.btn-primary { background: #d63500; color: #fff; }
.card { margin-bottom: 24px; background: #fff; border: 1px solid #e2e4e8; border-radius: 8px; box-shadow: 0 1px 2px rgba(0,0,0,.12); }
.card-head { display: flex; align-items: center; justify-content: space-between; padding: 12px 16px; border-bottom: 1px solid #ecedef; }
.card-head h2 { font-size: 16px; line-height: 16px; font-weight: 600; letter-spacing: -0.03em; }
.card-body { padding: 16px; }
.facts { display: grid; grid-template-columns: repeat(3, 1fr); gap: 12px; margin-bottom: 16px; }
.wide { grid-column: 1 / -1; }
dt { font-size: 12px; line-height: 16px; color: #6e6e78; }
.coords { font-variant-numeric: tabular-nums; }

/* Map */
.map { position: relative; height: 260px; border: 1px solid #dddfe2; border-radius: 4px; overflow: hidden; }
.map-art { display: block; width: 100%; height: 100%; font-family: "Noto Sans", sans-serif; }
.map-art text { paint-order: stroke; stroke: #fff; stroke-opacity: .75; stroke-width: 2px; stroke-linejoin: round; fill: #1a1a1a; }
.map-art .street text { font-size: 8px; }
.map-art .street.main text { font-size: 10px; stroke: none; }
.map-art .bridge text { font-size: 12px; text-anchor: middle; }
.map-art .stop text { font-size: 10px; font-weight: 700; text-anchor: middle; fill: #4d5cab; }
.map-art .green text { font-size: 10px; font-style: italic; font-weight: 600; text-anchor: middle; fill: #1f7f43; }
.map-art .exit text { font-size: 10px; font-style: italic; text-anchor: middle; fill: #9c2530; }
.map-art .river { font-size: 11px; font-style: italic; fill: #5a79b5; stroke: none; }
.map-art .rail { font-size: 9px; fill: #777; }
.map-art .district { font-size: 14px; fill: #777; }
.map-art .district.small { font-size: 10px; }
.map-art .shield rect { fill: #edd0d8; stroke: #d0a0b0; }
.map-art .shield text { font-size: 10px; text-anchor: middle; fill: #7a2645; stroke: none; }
.map-art .shield.trunk rect { fill: #f8d8d0; stroke: #d8a090; }
.zoom { position: absolute; left: 12px; top: 12px; width: 30px; border-radius: 4px; background: #fff; box-shadow: 0 0 0 1px rgba(0,0,0,.2); }
.zoom button { display: block; width: 30px; height: 30px; font: 700 22px/32px "DejaVu Sans Mono", monospace; color: #000; }
.zoom button + button { border-top: 1px solid #ccc; }
.credit { position: absolute; right: 0; bottom: 0; height: 22px; display: flex; align-items: center; gap: 4px; padding: 0 5px; background: rgba(255,255,255,.8); font-size: 15px; color: #333; }
.credit svg { width: 16px; height: 11px; }
.credit a { color: #0078a8; }

/* Table */
table { width: 100%; border-collapse: separate; border-spacing: 0; table-layout: fixed; }
th { height: 33px; padding: 0; text-align: left; font-size: 12px; font-weight: 500; color: #6e6e78; border-bottom: 1px solid #e0e2e6; }
.col-name { width: 40.1%; }
td { height: 49px; padding: 0; border-bottom: 1px solid #e4e5e8; }
tr:last-child td { height: 48px; border-bottom: 0; }
.name { font-weight: 500; }
.status { display: flex; align-items: center; gap: 6px; padding-top: 2px; color: #15803d; }
.act { text-align: right; }
```
